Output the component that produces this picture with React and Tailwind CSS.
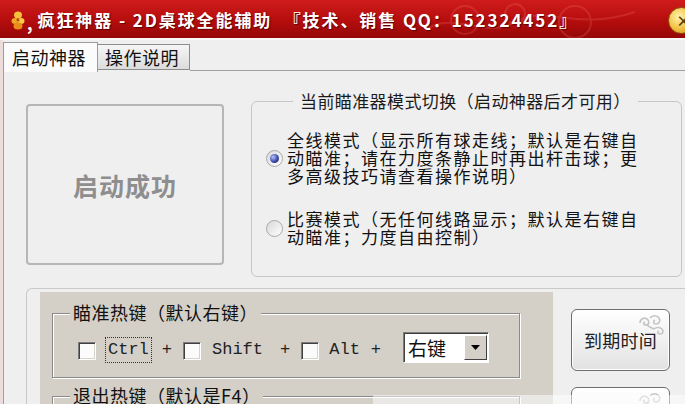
import React from "react";

const Radio = ({ checked }) => (
  <div className="w-[17px] h-[17px] shrink-0 rounded-full border border-[#a8a8a8] bg-gradient-to-br from-[#d8d8d8] to-white flex items-center justify-center">
    {checked && (
      <div className="w-[9px] h-[9px] rounded-full bg-[radial-gradient(circle_at_35%_35%,#b8c4ff,#3a48a8_55%,#1a2060)]" />
    )}
  </div>
);

const CheckBox = ({ className = "" }) => (
  <div
    className={`w-[18px] h-[18px] shrink-0 bg-[#fbfbfb] border border-t-[#7c7c7c] border-l-[#7c7c7c] border-r-white border-b-white shadow-[inset_1px_1px_0_#404040,inset_-1px_-1px_0_#d8d4cc] ${className}`}
  />
);

const Swirl = () => (
  <svg
    className="absolute right-[3px] top-[3px]"
    width="30"
    height="24"
    viewBox="0 0 30 24"
    fill="none"
    stroke="#c4c4c4"
    strokeWidth="1.6"
  >
    <path d="M4 10c0-4 4-6 7-4s2 6-1 6-3-3-1-3" />
    <path d="M14 5c2-3 7-3 9 0s0 6-3 6-3-3-1-4" />
    <path d="M18 16c2-2 6-2 8 0s1 5-2 5-3-2-1-3" />
    <path d="M11 12c2 2 5 3 7 4" />
  </svg>
);

const TitleBar = () => (
  <div className="relative h-[38px] bg-gradient-to-b from-[#cf1b1b] via-[#b80e0e] to-[#960707] flex items-center pl-[11px] overflow-hidden">
    <svg className="absolute right-[40px] top-0 opacity-20" width="220" height="38" viewBox="0 0 220 38" fill="none" stroke="#ff8080" strokeWidth="2">
      <circle cx="40" cy="20" r="14" />
      <circle cx="90" cy="14" r="10" />
      <circle cx="150" cy="22" r="16" />
      <path d="M0 30c30-20 60 10 90-8s60 10 120-10" />
    </svg>
    <svg width="14" height="19" viewBox="0 0 14 19" className="shrink-0 mt-[2px]">
      <ellipse cx="7" cy="4" rx="4" ry="3.5" fill="#f4c23a" />
      <ellipse cx="4" cy="10" rx="3.5" ry="3" fill="#f0a82a" />
      <ellipse cx="10" cy="10" rx="3.5" ry="3" fill="#f6cc44" />
      <ellipse cx="7" cy="15" rx="4.5" ry="3.5" fill="#e88e1a" />
      <circle cx="7" cy="9" r="1.5" fill="#b84a0a" />
    </svg>
    <span className="relative text-white font-bold text-[17px] leading-none ml-[2px] mt-[6px]">,</span>
    <span className="relative text-white font-bold text-[17px] leading-none ml-[5px] tracking-[1.9px] whitespace-pre [text-shadow:1px_1px_1px_#5a0000]">
      疯狂神器 - 2D桌球全能辅助  『技术、销售 QQ：152324452』
    </span>
    <div className="absolute left-[668px] top-[7px] w-[27px] h-[27px] rounded-full border border-[#8a5a10] bg-[radial-gradient(circle_at_40%_35%,#fff4b0,#f0c040_55%,#c88a18)] flex items-center pl-[7px]">
      <span className="text-[#5a3a08] text-[15px] font-bold leading-none">×</span>
    </div>
  </div>
);

export default function App() {
  return (
    <div className="relative w-[685px] h-[404px] overflow-hidden bg-[#efefef] font-['Noto_Sans_CJK_SC',sans-serif] text-[#111]">
      <TitleBar />
      <div className="h-[2px] bg-[#f8f8f8]" />
      <div className="flex flex-col h-[364px] border-l-[3px] border-[#ecdcdc]">
        {/* tabs */}
        <div className="flex items-end h-[32px] shrink-0">
          <div className="w-[95px] h-[30px] border border-b-0 border-[#9c9c9c] bg-[#fbfbfb] pl-[8px] text-[18px] leading-[28px] tracking-[0.5px]">
            启动神器
          </div>
          <div className="w-[92px] h-[26px] mb-[2px] border border-l-0 border-[#8c8c8c] bg-gradient-to-b from-[#f6f6f6] to-[#dcdcdc] pl-[7px] text-[18px] leading-[24px] tracking-[0.5px]">
            操作说明
          </div>
          <div className="flex-1 h-[2px] border-t border-[#a0a0a0]" />
        </div>

        {/* panel */}
        <div className="flex-1 flex flex-col border-l border-[#a0a0a0] pl-[22px] pt-[29px]">
          <div className="flex items-start">
            <div className="w-[198px] h-[161px] mt-[3px] rounded-[4px] border-2 border-[#b6b6b6] bg-[#efefef] flex items-center justify-center pt-[3px] text-[25px] font-bold text-[#8e8e8e] tracking-[1px]">
              启动成功
            </div>
            <div className="relative ml-[27px] w-[431px] h-[176px] rounded-[6px] border border-[#c6c6c6] pl-[14px] pt-[29px]">
              <div className="absolute left-[41px] top-[-10px] bg-[#efefef] px-[7px] text-[17px] leading-[18px] tracking-[0.4px] text-[#1a1a1a] whitespace-nowrap">
                当前瞄准器模式切换（启动神器后才可用）
              </div>
              <div className="flex items-center">
                <Radio checked />
                <div className="ml-[4px] text-[17px] leading-[18px] tracking-[1.5px] whitespace-nowrap">
                  <div>全线模式（显示所有球走线；默认是右键自</div>
                  <div>动瞄准；请在力度条静止时再出杆击球；更</div>
                  <div>多高级技巧请查看操作说明）</div>
                </div>
              </div>
              <div className="flex items-center mt-[25px]">
                <Radio />
                <div className="ml-[4px] text-[17px] leading-[18px] tracking-[1.5px] whitespace-nowrap">
                  <div>比赛模式（无任何线路显示；默认是右键自</div>
                  <div>动瞄准；力度自由控制）</div>
                </div>
              </div>
            </div>
          </div>

          {/* lower section */}
          <div className="flex flex-1 mt-[11px] rounded-tl-[6px] border-t border-l border-[#c9c9c9] pl-[13px] pt-[3px]">
            <div className="w-[513px] bg-[#d4d0c8] pt-[21px] pl-[12px]">
              <div className="relative w-[468px] h-[65px] border border-[#8a8a8a] shadow-[inset_1px_1px_0_#fff,1px_1px_0_#fff] pt-[18px] pl-[25px]">
                <div className="absolute left-[17px] top-[-12px] bg-[#d4d0c8] px-[3px] text-[18px] leading-[20px] tracking-[0.5px] whitespace-nowrap">
                  瞄准热键（默认右键）
                </div>
                <div className="flex items-start h-[31px] font-['Liberation_Mono',monospace] text-[17px] text-[#222]">
                  <CheckBox className="mt-[10px]" />
                  <span className="ml-[9px] mt-[5px] h-[26px] px-[2px] border border-dotted border-[#333] leading-[24px]">Ctrl</span>
                  <span className="ml-[10px] mt-[5px] leading-[26px]">+</span>
                  <CheckBox className="ml-[11px] mt-[10px]" />
                  <span className="ml-[11px] mt-[5px] leading-[26px]">Shift</span>
                  <span className="ml-[17px] mt-[5px] leading-[26px]">+</span>
                  <CheckBox className="ml-[11px] mt-[10px]" />
                  <span className="ml-[10px] mt-[5px] leading-[26px]">Alt</span>
                  <span className="ml-[11px] mt-[5px] leading-[26px]">+</span>
                  <div className="ml-[22px] w-[86px] h-[31px] flex items-center bg-white border border-t-[#7c7c7c] border-l-[#7c7c7c] border-r-white border-b-white shadow-[inset_1px_1px_0_#404040] font-['Noto_Sans_CJK_SC',sans-serif]">
                    <span className="pl-[4px] text-[19px] leading-none text-[#111]">右键</span>
                    <div className="ml-auto mr-[1px] w-[23px] h-[25px] bg-[#d4d0c8] border border-t-white border-l-white border-r-[#404040] border-b-[#404040] flex items-center justify-center">
                      <svg width="9" height="5" viewBox="0 0 9 5">
                        <path d="M0 0h9L4.5 5z" fill="#000" />
                      </svg>
                    </div>
                  </div>
                </div>
              </div>
              <div className="relative mt-[18px] w-[468px] h-[60px] border border-[#8a8a8a] shadow-[inset_1px_1px_0_#fff,1px_1px_0_#fff]">
                <div className="absolute left-[17px] top-[-12px] bg-[#d4d0c8] px-[3px] text-[18px] leading-[20px] tracking-[0.5px] whitespace-nowrap">
                  退出热键（默认是F4）
                </div>
              </div>
            </div>
            <div className="flex flex-col pl-[18px] pt-[17px]">
              <button className="relative w-[99px] h-[62px] rounded-[6px] border border-[#6e6e6e] bg-gradient-to-b from-white to-[#e2e2e2] shadow-[inset_0_0_0_1px_#fff] text-[18px] text-[#222] tracking-[0.3px]">
                <Swirl />
                <span className="relative">到期时间</span>
              </button>
              <button className="relative mt-[16px] w-[99px] h-[62px] rounded-[6px] border border-[#6e6e6e] bg-gradient-to-b from-white to-[#e2e2e2] shadow-[inset_0_0_0_1px_#fff]">
                <Swirl />
              </button>
            </div>
          </div>
        </div>
      </div>
      <div className="absolute left-[373px] bottom-0 w-[312px] h-[9px] bg-white/50" />
    </div>
  );
}
